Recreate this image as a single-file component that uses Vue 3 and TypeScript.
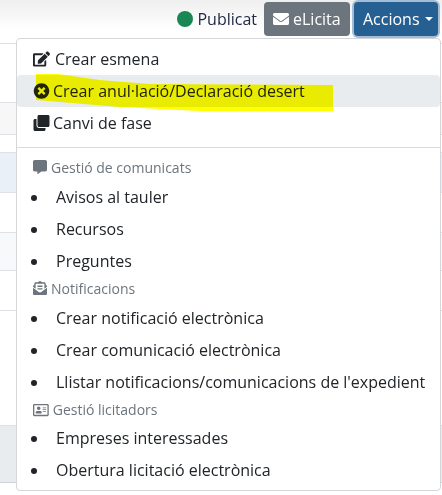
<template>
  <div class="page">
    <div class="toolbar">
      <span class="status"><i class="status-dot"></i>Publicat</span>
      <button class="btn btn-grey">
        <svg class="btn-icon" viewBox="0 0 512 512"><path :d="icons.envelope" /></svg>
        eLicita
      </button>
      <button class="btn btn-blue">Accions<i class="caret"></i></button>
    </div>

    <div v-for="(row, i) in rows" :key="i" class="row" :class="row.tone" :style="{ height: row.h + 'px' }"></div>

    <div class="menu">
      <a class="item">
        <svg class="icon" viewBox="0 0 576 512"><path :d="icons.edit" /></svg>
        <span class="gap-edit">Crear esmena</span>
      </a>
      <a class="item active">
        <svg class="icon" viewBox="0 0 512 512"><path :d="icons.times" /></svg>
        <span>Crear anul·lació/Declaració desert</span>
      </a>
      <a class="item">
        <svg class="icon" viewBox="0 0 512 512"><path :d="icons.clone" /></svg>
        <span>Canvi de fase</span>
      </a>
      <hr class="divider" />

      <section v-for="group in groups" :key="group.title" class="group">
        <div class="header">
          <svg class="head-icon" :viewBox="group.box"><path :d="group.icon" /></svg>
          <span>{{ group.title }}</span>
        </div>
        <ul class="list">
          <li v-for="link in group.links" :key="link"><a class="link">{{ link }}</a></li>
        </ul>
      </section>
    </div>

    <svg class="marker" viewBox="0 0 442 495">
      <polygon points="36,74 58,74 100,80 150,84 333,85 333,111 200,111 120,107 60,102 36,100" />
    </svg>
  </div>
</template>

<script setup lang="ts">
const icons = {
  envelope:
    'M502.3 190.8c3.9-3.1 9.7-.2 9.7 4.7V400c0 26.5-21.5 48-48 48H48c-26.5 0-48-21.5-48-48V195.6c0-5 5.7-7.8 9.7-4.7 22.4 17.4 52.1 39.5 154.1 113.6 21.1 15.4 56.7 47.8 92.2 47.6 35.7.3 72-32.8 92.3-47.6 102-74.1 131.6-96.3 154-113.7zM256 320c23.2.4 56.6-29.2 73.4-41.4 132.7-96.3 142.8-104.7 173.4-128.7 5.8-4.5 9.2-11.5 9.2-18.9v-19c0-26.5-21.5-48-48-48H48C21.5 64 0 85.5 0 112v19c0 7.4 3.4 14.3 9.2 18.9 30.6 23.9 40.7 32.4 173.4 128.7 16.8 12.2 50.2 41.8 73.4 41.4z',
  edit:
    'M402.6 83.2l90.2 90.2c3.8 3.8 3.8 10 0 13.8L274.4 405.6l-92.8 10.3c-12.4 1.4-22.9-9.1-21.5-21.5l10.3-92.8L388.8 83.2c3.8-3.8 10-3.8 13.8 0zm162-22.9l-48.8-48.8c-15.2-15.2-39.9-15.2-55.2 0l-35.4 35.4c-3.8 3.8-3.8 10 0 13.8l90.2 90.2c3.8 3.8 10 3.8 13.8 0l35.4-35.4c15.2-15.3 15.2-40 0-55.2zM384 346.2V448H64V128h229.8c3.2 0 6.2-1.3 8.5-3.5l40-40c7.6-7.6 2.2-20.5-8.5-20.5H48C21.5 64 0 85.5 0 112v352c0 26.5 21.5 48 48 48h352c26.5 0 48-21.5 48-48V306.2c0-10.7-12.9-16-20.5-8.5l-40 40c-2.2 2.3-3.5 5.3-3.5 8.5z',
  times:
    'M256 8C119 8 8 119 8 256s111 248 248 248 248-111 248-248S393 8 256 8zm121.6 313.1c4.7 4.7 4.7 12.3 0 17L338 377.6c-4.7 4.7-12.3 4.7-17 0L256 312l-65.1 65.6c-4.7 4.7-12.3 4.7-17 0L134.4 338c-4.7-4.7-4.7-12.3 0-17l65.6-65-65.6-65.1c-4.7-4.7-4.7-12.3 0-17l39.6-39.6c4.7-4.7 12.3-4.7 17 0l65 65.7 65.1-65.6c4.7-4.7 12.3-4.7 17 0l39.6 39.6c4.7 4.7 4.7 12.3 0 17L312 256l65.6 65.1z',
  clone:
    'M464 0c26.51 0 48 21.49 48 48v288c0 26.51-21.49 48-48 48H176c-26.51 0-48-21.49-48-48V48c0-26.51 21.49-48 48-48h288M176 416c-44.112 0-80-35.888-80-80V128H48c-26.51 0-48 21.49-48 48v288c0 26.51 21.49 48 48 48h288c26.51 0 48-21.49 48-48v-48H176z',
  comment:
    'M448 0H64C28.7 0 0 28.7 0 64v288c0 35.3 28.7 64 64 64h96v84c0 9.8 11.2 15.5 19.1 9.7L304 416h144c35.3 0 64-28.7 64-64V64c0-35.3-28.7-64-64-64z',
  openText:
    'M176 216h160c8.84 0 16-7.16 16-16v-16c0-8.84-7.16-16-16-16H176c-8.84 0-16 7.16-16 16v16c0 8.84 7.16 16 16 16zm-16 80c0 8.84 7.16 16 16 16h160c8.84 0 16-7.16 16-16v-16c0-8.84-7.16-16-16-16H176c-8.84 0-16 7.16-16 16v16zm96 121.13c-16.42 0-32.84-5.06-46.86-15.19L0 250.86V464c0 26.51 21.49 48 48 48h416c26.51 0 48-21.49 48-48V250.86L302.86 401.94c-14.02 10.12-30.44 15.19-46.86 15.19zm237.61-254.18c-8.85-6.94-17.24-13.47-29.61-22.81V96c0-26.51-21.49-48-48-48h-77.55c-3.04-2.2-5.87-4.26-9.04-6.56C312.6 29.17 279.2-.35 256 0c-23.2-.35-56.59 29.17-73.41 41.44-3.17 2.3-6 4.36-9.04 6.56H96c-26.51 0-48 21.49-48 48v44.14c-12.37 9.33-20.76 15.87-29.61 22.81A47.995 47.995 0 0 0 0 200.72v10.65l96 69.35V96h320v184.72l96-69.35v-10.65c0-14.74-6.78-28.67-18.39-37.77z',
  card:
    'M528 32H48C21.5 32 0 53.5 0 80v352c0 26.5 21.5 48 48 48h480c26.5 0 48-21.5 48-48V80c0-26.5-21.5-48-48-48zm0 400H48V80h480v352zM208 256c35.3 0 64-28.7 64-64s-28.7-64-64-64-64 28.7-64 64 28.7 64 64 64zm-89.6 128h179.2c12.4 0 22.4-8.6 22.4-19.2v-19.2c0-31.8-30.1-57.6-67.2-57.6-10.8 0-18.7 8-44.8 8-26.9 0-33.4-8-44.8-8-37.1 0-67.2 25.8-67.2 57.6v19.2c0 10.6 10 19.2 22.4 19.2zM360 320h112c4.4 0 8-3.6 8-8v-16c0-4.4-3.6-8-8-8H360c-4.4 0-8 3.6-8 8v16c0 4.4 3.6 8 8 8zm0-64h112c4.4 0 8-3.6 8-8v-16c0-4.4-3.6-8-8-8H360c-4.4 0-8 3.6-8 8v16c0 4.4 3.6 8 8 8zm0-64h112c4.4 0 8-3.6 8-8v-16c0-4.4-3.6-8-8-8H360c-4.4 0-8 3.6-8 8v16c0 4.4 3.6 8 8 8z',
}

const rows = [
  { h: 59, tone: '' },
  { h: 32, tone: 'grey' },
  { h: 18, tone: '' },
  { h: 40, tone: 'blue' },
  { h: 40, tone: '' },
  { h: 38, tone: 'pale' },
  { h: 40, tone: '' },
  { h: 115, tone: '' },
  { h: 57, tone: 'dark' },
]

const groups = [
  {
    title: 'Gestió de comunicats',
    icon: icons.comment,
    box: '0 0 512 512',
    links: ['Avisos al tauler', 'Recursos', 'Preguntes'],
  },
  {
    title: 'Notificacions',
    icon: icons.openText,
    box: '0 0 512 512',
    links: [
      'Crear notificació electrònica',
      'Crear comunicació electrònica',
      "Llistar notificacions/comunicacions de l'expedient",
    ],
  },
  {
    title: 'Gestió licitadors',
    icon: icons.card,
    box: '0 0 576 512',
    links: ['Empreses interessades', 'Obertura licitació electrònica'],
  },
]
</script>

<style scoped>
.page {
  position: relative;
  width: 442px;
  height: 495px;
  overflow: hidden;
  background: #fff;
  color: #212529;
  font-family: 'Open Sans', sans-serif;
  font-size: 16px;
}

.toolbar {
  display: flex;
  justify-content: flex-end;
  align-items: flex-start;
  gap: 4px;
  height: 44px;
  box-sizing: border-box;
  padding: 2px 4px 0 0;
  border-bottom: 1px solid #dee2e6;
  background: linear-gradient(#efefef, #fff 30px);
}

.status {
  display: flex;
  align-items: center;
  gap: 4px;
  height: 34px;
  margin-right: 3px;
  color: #212b45;
}

.status-dot {
  width: 16px;
  height: 16px;
  border-radius: 50%;
  background: #198754;
}

.btn {
  display: flex;
  align-items: center;
  height: 34px;
  padding: 0 9px;
  border: 0;
  border-radius: 4px;
  color: #fff;
  font: inherit;
}

.btn-grey {
  width: 86px;
  background: #6c757d;
}

.btn-icon {
  width: 16px;
  height: 16px;
  margin-right: 4px;
  fill: #fff;
}

.btn-blue {
  width: 84px;
  background: #265f91;
  box-shadow: 0 0 0 2px #a3bdd6;
}

.caret {
  margin-left: 5px;
  border-top: 4px solid #fff;
  border-left: 4px solid transparent;
  border-right: 4px solid transparent;
}

.row {
  box-sizing: border-box;
  border-bottom: 1px solid #dee2e6;
}

.grey {
  background: #f7f7f7;
}

.blue {
  background: #e9f0f8;
}

.pale {
  background: #f8f9fb;
}

.dark {
  background: #e9ecef;
  border-bottom-color: #ced4da;
}

.menu {
  position: absolute;
  top: 38px;
  left: 16px;
  width: 425px;
  height: 453px;
  box-sizing: border-box;
  padding: 4px 0;
  border: 1px solid #d4d6d9;
  border-radius: 4px;
  background: #fff;
}

.item {
  display: flex;
  align-items: center;
  height: 32px;
  padding: 0 16px;
  border-radius: 4px;
}

.active {
  background: #e9ecef;
}

.icon {
  height: 16px;
  margin-right: 3px;
  fill: #212529;
}

.item .icon {
  width: 17px;
}

.gap-edit {
  margin-left: 2px;
}

.divider {
  height: 0;
  margin: 8px 0;
  border: 0;
  border-top: 1px solid #d9dbdd;
}

.header {
  display: flex;
  align-items: center;
  height: 24px;
  padding: 0 16px;
  color: #6c757d;
  font-size: 14px;
}

.head-icon {
  height: 14px;
  margin-right: 4px;
  fill: #6c757d;
}

.group:nth-of-type(1) .header {
  box-sizing: border-box;
  padding-bottom: 2px;
}

.group:nth-of-type(2) .list {
  margin-top: 1px;
}

.group:nth-of-type(3) .header {
  height: 23px;
  margin-top: 1px;
}

.list {
  margin: 0;
  padding: 0 0 0 32px;
}

.list li {
  height: 32px;
}

.link {
  display: block;
  padding: 1px 7px 0;
  line-height: 32px;
  white-space: nowrap;
}

.marker {
  position: absolute;
  inset: 0;
  width: 442px;
  height: 495px;
  fill: #ffff00;
  mix-blend-mode: multiply;
  pointer-events: none;
}
</style>
